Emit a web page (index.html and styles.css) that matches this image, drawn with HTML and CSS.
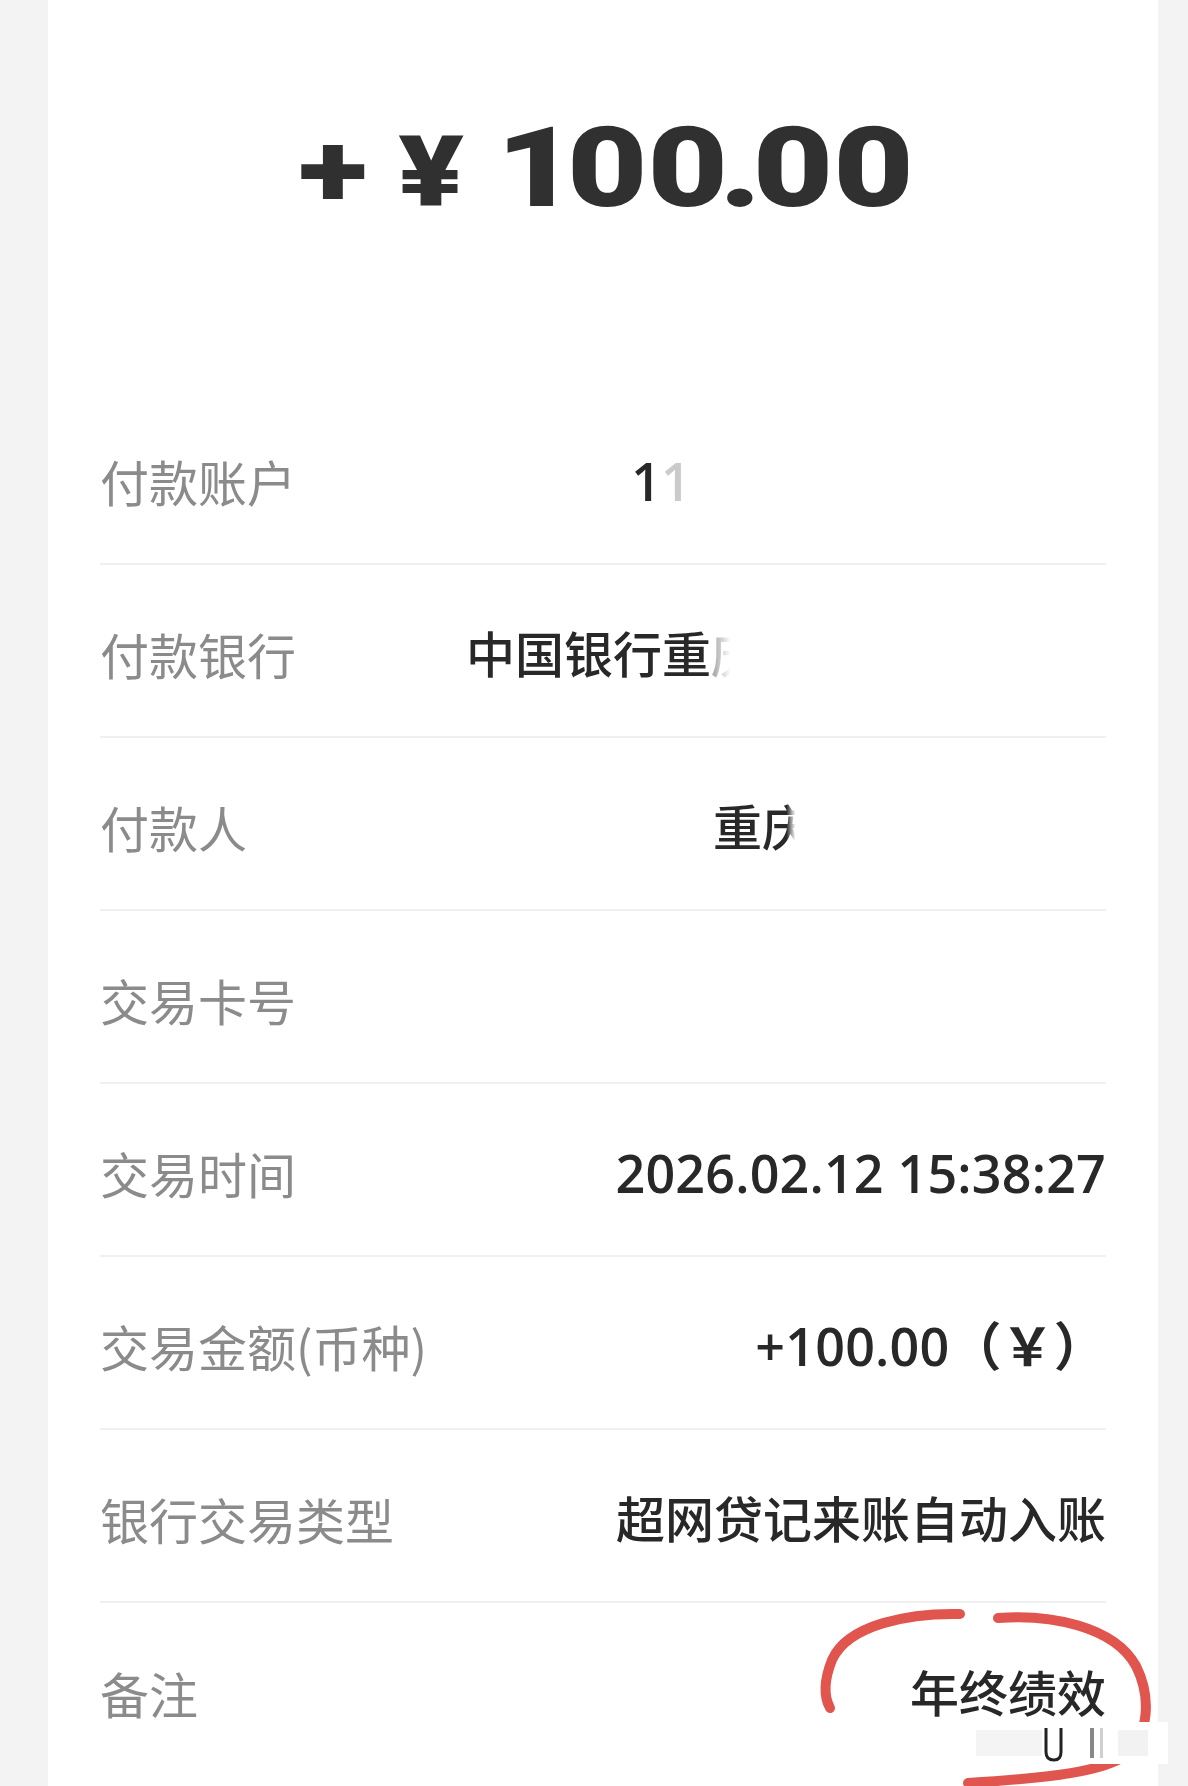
FILE: index.html
```html
<!DOCTYPE html>
<html lang="zh-CN">
<head>
  <meta charset="UTF-8">
  <meta name="viewport" content="width=device-width, initial-scale=1.0">
  <title>交易详情</title>
  <link rel="stylesheet" href="styles.css">
</head>
<body>
  <!-- Receipt card -->
  <div class="card">
    <!-- Amount -->
    <div class="amount">
      <div class="amount-inner">
        <span class="amount-sign">+</span>
        <span class="amount-yen">¥</span>
        <span class="amount-num"><span class="tight-one">1</span>0<span class="tight-dot">0.</span>00</span>
      </div>
    </div>

    <!-- Details -->
    <div class="details">
      <div class="row">
        <span class="label">付款账户</span>
        <span class="value num">1<span class="faded">1</span><span class="mask mask-account"></span></span>
      </div>
      <div class="row">
        <span class="label">付款银行</span>
        <span class="value">中国银行重<span class="erased erased-soft">庆</span><span class="mask mask-bank"></span></span>
      </div>
      <div class="row">
        <span class="label">付款人</span>
        <span class="value">重<span class="erased">庆</span><span class="mask mask-payer"></span></span>
      </div>
      <div class="row">
        <span class="label">交易卡号</span>
        <span class="value"></span>
      </div>
      <div class="row">
        <span class="label">交易时间</span>
        <span class="value num">2026.02.12 15:38:27</span>
      </div>
      <div class="row">
        <span class="label">交易金额(币种)</span>
        <span class="value num">+100.00（￥）</span>
      </div>
      <div class="row">
        <span class="label">银行交易类型</span>
        <span class="value">超网贷记来账自动入账</span>
      </div>
      <div class="row row-note">
        <span class="label">备注</span>
        <span class="value">年终绩效</span>
        <!-- hand drawn marker -->
        <svg class="marker" width="388" height="190" viewBox="0 0 388 190">
          <g fill="none" stroke="#e0554e" stroke-width="10" stroke-linecap="round">
            <path d="M160 14 C110 13 48 24 32 60 C24 80 23 95 30 108"/>
            <path d="M198 18 C250 14 314 26 336 66 C352 98 348 134 328 154 C304 172 248 178 168 183"/>
          </g>
          <rect x="172" y="122" width="196" height="42" fill="#ffffff"/>
          <rect x="176" y="130" width="66" height="26" fill="#f4f4f4"/>
          <path d="M246 128 L246 152 Q246 160 254 160 Q261 160 261 152 L261 128" fill="none" stroke="#222" stroke-width="3"/>
          <rect x="290" y="128" width="4" height="30" fill="#888"/>
          <rect x="300" y="128" width="3" height="30" fill="#cfcfcf"/>
          <rect x="318" y="130" width="30" height="26" fill="#f2f2f2"/>
        </svg>
      </div>
    </div>
  </div>
</body>
</html>
```

FILE: styles.css
```css
/* Page */
body {
  margin: 0;
  background: #f3f3f3;
  font-family: "Noto Sans CJK SC", sans-serif;
  overflow: hidden;
}

.card {
  margin-left: 48px;
  width: 1110px;
  min-height: 100vh;
  padding: 0 52px;
  box-sizing: border-box;
  background: #ffffff;
}

/* Big amount */
.amount {
  height: 392px;
  padding: 112px 0 0 6px;
  box-sizing: border-box;
  display: flex;
  justify-content: center;
  align-items: flex-start;
}

.amount-inner {
  display: flex;
  align-items: baseline;
  font-family: Roboto, "Liberation Sans", sans-serif;
  font-weight: 900;
  color: #303030;
  line-height: 1;
  transform: scaleX(1.24);
}

.amount-sign {
  font-size: 104px;
  margin-right: 25px;
}

.amount-yen {
  font-size: 98px;
  margin-right: 26px;
}

.amount-num {
  font-size: 112px;
}

.tight-one {
  letter-spacing: -8px;
}

.tight-dot {
  letter-spacing: -7px;
}

/* Detail rows */
.row {
  display: flex;
  justify-content: space-between;
  align-items: center;
  height: 173px;
  padding-top: 6px;
  box-sizing: border-box;
  border-bottom: 2px solid #f0f0f0;
  font-size: 49px;
  line-height: 60px;
  white-space: nowrap;
}

.row:last-child {
  border-bottom: none;
}

.row-note {
  position: relative;
}

.label {
  color: #8b8b8b;
}

.value {
  color: #282828;
  font-family: "Open Sans", "Noto Sans CJK SC", sans-serif;
  font-weight: 500;
}

.value.num {
  font-size: 52px;
  font-weight: 600;
  letter-spacing: 0.2px;
}

.faded {
  color: #cacaca;
}

/* partly wiped characters */
.erased {
  background: linear-gradient(90deg, #282828 50%, rgba(40, 40, 40, 0) 68%);
  -webkit-background-clip: text;
  background-clip: text;
  color: transparent;
}

.erased-soft {
  background: linear-gradient(90deg, rgba(90, 90, 90, 0.6) 0%, rgba(90, 90, 90, 0) 40%);
  -webkit-background-clip: text;
  background-clip: text;
}

/* blanked out parts */
.mask {
  display: inline-block;
  height: 1px;
  vertical-align: middle;
}

.mask-account {
  width: 415px;
}

.mask-bank {
  width: 346px;
}

.mask-payer {
  width: 295px;
}

.marker {
  position: absolute;
  left: 700px;
  top: -3px;
}
```
